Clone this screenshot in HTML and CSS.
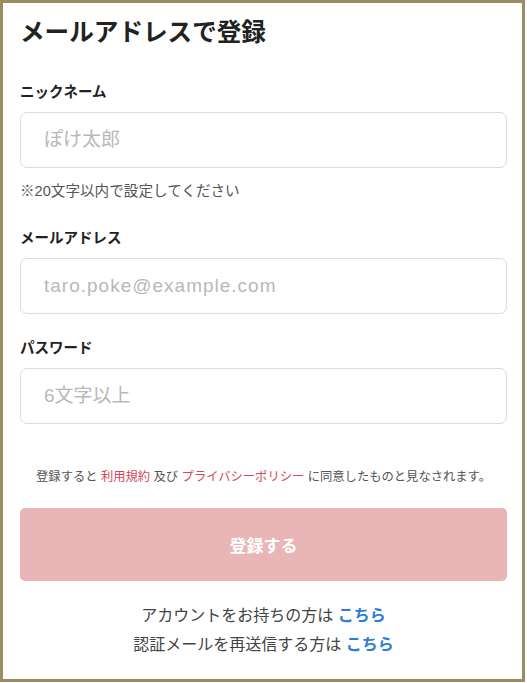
FILE: index.html
```html
<!DOCTYPE html>
<html lang="ja">
<head>
<meta charset="utf-8">
<title>メールアドレスで登録</title>
<link rel="stylesheet" href="styles.css">
</head>
<body>
<div class="frame">
  <h1 class="title">メールアドレスで登録</h1>
  <form class="form">
    <div class="field">
      <label class="label" for="nick">ニックネーム</label>
      <input class="input" id="nick" type="text" placeholder="ぽけ太郎">
      <p class="hint">※20文字以内で設定してください</p>
    </div>
    <div class="field field-mail">
      <label class="label" for="mail">メールアドレス</label>
      <input class="input input-mail" id="mail" type="email" placeholder="taro.poke@example.com">
    </div>
    <div class="field field-pass">
      <label class="label" for="pass">パスワード</label>
      <input class="input" id="pass" type="password" placeholder="6文字以上">
    </div>
    <p class="terms">登録すると <a class="terms-link" href="#">利用規約</a> 及び <a class="terms-link" href="#">プライバシーポリシー</a> に同意したものと見なされます。</p>
    <button class="submit" type="button">登録する</button>
  </form>
  <div class="links">
    <p class="link-line">アカウントをお持ちの方は <a class="link" href="#">こちら</a></p>
    <p class="link-line">認証メールを再送信する方は <a class="link" href="#">こちら</a></p>
  </div>
</div>
</body>
</html>
```

FILE: styles.css
```css
* {
  box-sizing: border-box;
}

html, body {
  margin: 0;
  padding: 0;
  background: #ffffff;
}

body {
  font-family: "Liberation Sans", "Noto Sans CJK JP", sans-serif;
  color: #222222;
}

.frame {
  width: 525px;
  height: 682px;
  border: 3px solid #9c8c62;
  padding: 13px 15px 0 17px;
  background: #ffffff;
}

.title {
  margin: 0;
  font-size: 24.6px;
  line-height: 34px;
  font-weight: 700;
  color: #222222;
}

.form {
  display: flex;
  flex-direction: column;
}

.field {
  display: flex;
  flex-direction: column;
}

.field:first-child {
  margin-top: 32px;
}

.field-mail {
  margin-top: 27px;
}

.field-pass {
  margin-top: 24px;
}

.label {
  font-size: 14.5px;
  line-height: 20px;
  font-weight: 700;
  color: #222222;
  margin-bottom: 10px;
}

.input {
  width: 100%;
  height: 56px;
  border: 1px solid #dcdcdc;
  border-radius: 7px;
  padding: 0 23px;
  font-family: "Liberation Sans", "Noto Sans CJK JP", sans-serif;
  font-size: 19px;
  color: #333333;
  background: #ffffff;
  outline: none;
}

.input::placeholder {
  color: #b8b8b8;
}

.input-mail::placeholder {
  letter-spacing: 1px;
}

.hint {
  margin: 13px 0 0;
  font-size: 14.6px;
  line-height: 20px;
  color: #555555;
}

.terms {
  margin: 44px 0 0;
  text-align: center;
  font-size: 12.3px;
  line-height: 18px;
  color: #555555;
}

.terms-link {
  color: #d2495a;
  text-decoration: none;
}

.submit {
  margin-top: 22px;
  width: 100%;
  height: 73px;
  border: none;
  border-radius: 5px;
  background: #e9b5b6;
  color: #ffffff;
  font-family: "Liberation Sans", "Noto Sans CJK JP", sans-serif;
  font-size: 17px;
  font-weight: 700;
}

.links {
  margin-top: 20px;
  text-align: center;
}

.link-line {
  margin: 0;
  font-size: 16px;
  line-height: 29px;
  color: #444444;
}

.link {
  color: #2d7dd2;
  font-weight: 700;
  text-decoration: none;
}
```
